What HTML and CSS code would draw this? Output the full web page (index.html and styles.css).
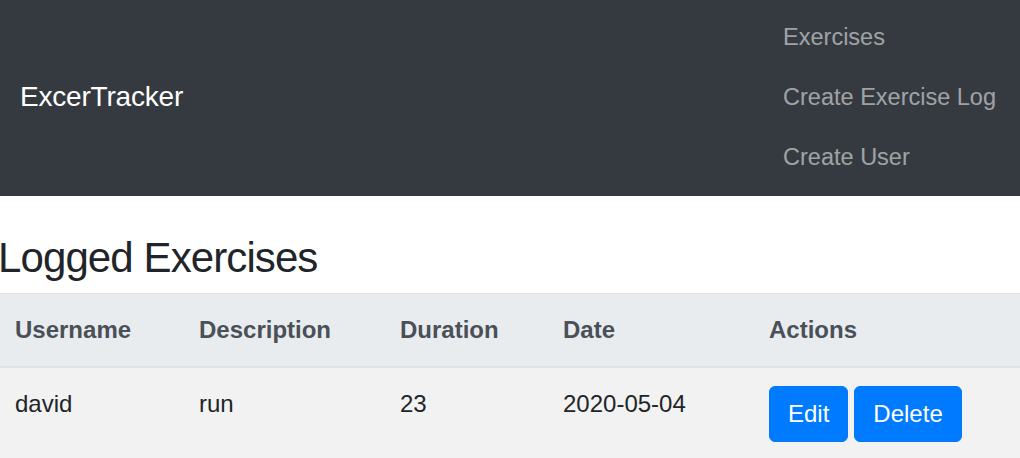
FILE: index.html
```html
<!DOCTYPE html>
<html>
<head>
<meta charset="utf-8">
<link rel="stylesheet" href="styles.css">
</head>
<body>
<nav class="navbar">
  <a class="brand" href="#">ExcerTracker</a>
  <ul class="nav">
    <li><a class="nav-link" href="#">Exercises</a></li>
    <li><a class="nav-link" href="#">Create Exercise Log</a></li>
    <li><a class="nav-link" href="#">Create User</a></li>
  </ul>
</nav>
<main class="content">
  <h3 class="title">Logged Exercises</h3>
  <table class="table">
    <thead>
      <tr>
        <th class="c-user">Username</th>
        <th class="c-desc">Description</th>
        <th class="c-dur">Duration</th>
        <th class="c-date">Date</th>
        <th class="c-act">Actions</th>
      </tr>
    </thead>
    <tbody>
      <tr>
        <td>david</td>
        <td>run</td>
        <td>23</td>
        <td>2020-05-04</td>
        <td>
          <div class="actions">
            <a class="btn" href="#">Edit</a>
            <a class="btn" href="#">Delete</a>
          </div>
        </td>
      </tr>
    </tbody>
  </table>
</main>
</body>
</html>
```

FILE: styles.css
```css
html, body {
  margin: 0;
  padding: 0;
  background: #fff;
  font-family: "Liberation Sans", Arial, sans-serif;
  color: #212529;
  overflow: hidden;
}

.navbar {
  background: #343a40;
  height: 196px;
  box-sizing: border-box;
  padding: 7px 24px 9px 20px;
  display: flex;
  justify-content: space-between;
  align-items: center;
}

.brand {
  color: #fff;
  text-decoration: none;
  font-size: 28px;
  line-height: 36px;
  letter-spacing: -0.2px;
}

.nav {
  list-style: none;
  margin: 0;
  padding: 0;
  display: flex;
  flex-direction: column;
  align-self: stretch;
}

.nav-link {
  display: block;
  color: rgba(255, 255, 255, 0.55);
  text-decoration: none;
  font-size: 23.5px;
  line-height: 36px;
  padding: 12px 0;
}

.content {
  margin-left: -3px;
}

.title {
  margin: 38px 0 11px 1px;
  font-size: 42px;
  line-height: 48px;
  font-weight: normal;
  letter-spacing: -0.9px;
  color: #212529;
}

.table {
  border-collapse: collapse;
  width: 1040px;
  font-size: 24px;
}

.table th,
.table td {
  text-align: left;
  padding: 18px 18px;
  line-height: 36px;
  vertical-align: top;
}

.table thead th {
  background: #e9ecef;
  color: #495057;
  font-weight: bold;
  border-top: 1px solid #dee2e6;
  border-bottom: 2px solid #dee2e6;
}

.table tbody td {
  background: #f2f2f2;
  color: #212529;
}

.c-user { width: 148px; }
.c-desc { width: 165px; }
.c-dur { width: 127px; }
.c-date { width: 170px; }

.actions {
  display: flex;
  gap: 6px;
  margin-top: 0;
}

.btn {
  display: inline-block;
  background: #007bff;
  color: #fff;
  text-decoration: none;
  border: 1px solid #007bff;
  border-radius: 6px;
  padding: 9px 18px;
  line-height: 36px;
  font-size: 24px;
}
```
